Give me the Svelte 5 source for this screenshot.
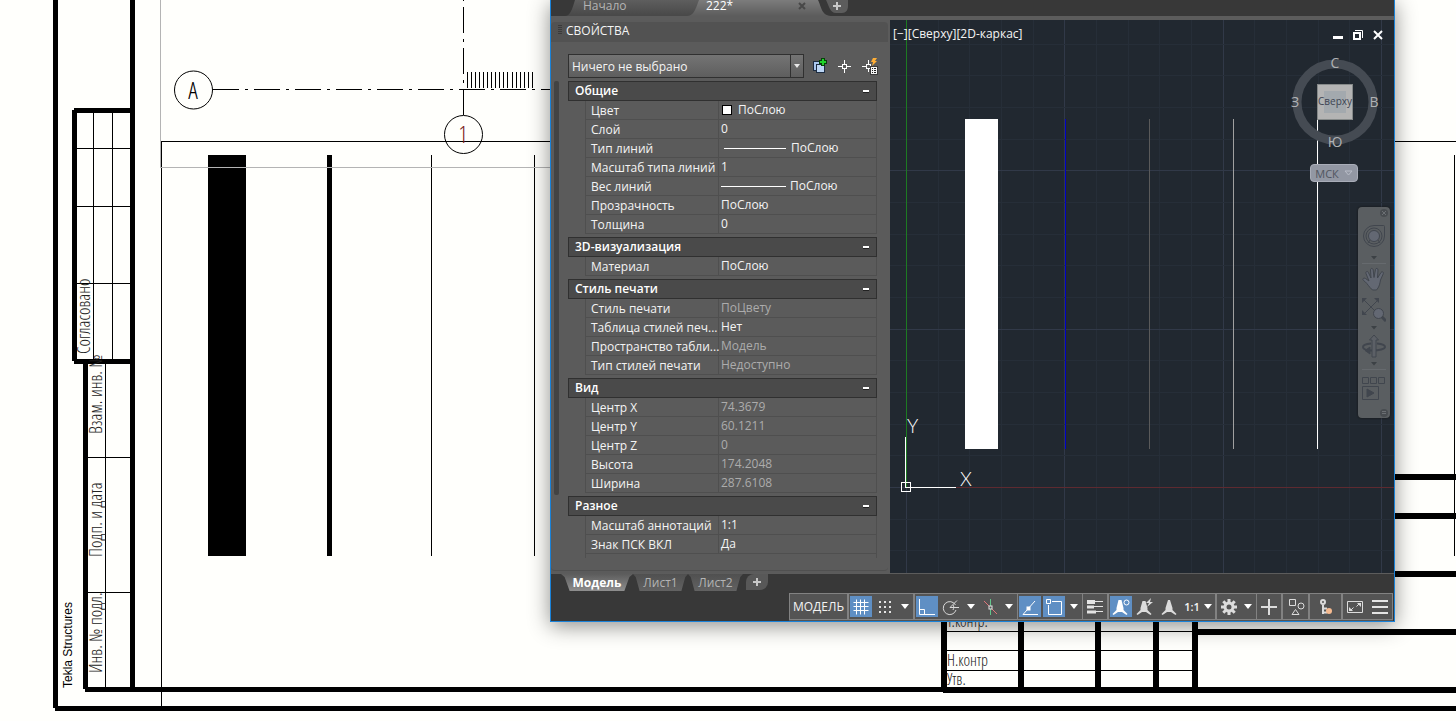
<script lang="ts">
  type Row = { label: string; value: string; kind?: 'color' | 'line' | 'weight'; muted?: boolean };
  type Section = { title: string; rows: Row[] };

  const sections: Section[] = [
    {
      title: 'Общие',
      rows: [
        { label: 'Цвет', value: 'ПоСлою', kind: 'color' },
        { label: 'Слой', value: '0' },
        { label: 'Тип линий', value: 'ПоСлою', kind: 'line' },
        { label: 'Масштаб типа линий', value: '1' },
        { label: 'Вес линий', value: 'ПоСлою', kind: 'weight' },
        { label: 'Прозрачность', value: 'ПоСлою' },
        { label: 'Толщина', value: '0' },
      ],
    },
    { title: '3D-визуализация', rows: [{ label: 'Материал', value: 'ПоСлою' }] },
    {
      title: 'Стиль печати',
      rows: [
        { label: 'Стиль печати', value: 'ПоЦвету', muted: true },
        { label: 'Таблица стилей печ...', value: 'Нет' },
        { label: 'Пространство табли...', value: 'Модель', muted: true },
        { label: 'Тип стилей печати', value: 'Недоступно', muted: true },
      ],
    },
    {
      title: 'Вид',
      rows: [
        { label: 'Центр X', value: '74.3679', muted: true },
        { label: 'Центр Y', value: '60.1211', muted: true },
        { label: 'Центр Z', value: '0', muted: true },
        { label: 'Высота', value: '174.2048', muted: true },
        { label: 'Ширина', value: '287.6108', muted: true },
      ],
    },
    {
      title: 'Разное',
      rows: [
        { label: 'Масштаб аннотаций', value: '1:1' },
        { label: 'Знак ПСК ВКЛ', value: 'Да' },
      ],
    },
  ];

  let closed = $state<Record<string, boolean>>({});
  let selection = $state('none');
  let layout = $state('Модель');

  // Grid lines, every fifth one is major. Origin of the UCS is at 16,467.
  const step = 31.66;
  const range = (from: number, to: number) => Array.from({ length: to - from }, (_, i) => from + i);
  const gridX = range(0, 60).map((i) => ({ at: Math.round(16 + i * step), major: i % 5 === 0 }));
  const gridY = range(-3, 15).map((i) => ({ at: Math.round(467 - i * step), major: i % 5 === 0 }));

  const hatch = range(0, 17).map((i) => 467 + i * 4 + (i > 10 ? 1 : 0));

  function toggle(title: string) {
    closed[title] = !closed[title];
  }
</script>

{#snippet arrow(name: string)}
  <button class="cell arrow" aria-label={name}>
    <svg width="8" height="5" viewBox="0 0 8 5"><path d="M0 0h8L4 5z" fill="#fff" /></svg>
  </button>
{/snippet}

{#snippet navArrow(name: string)}
  <button class="nav-arrow" aria-label={name}>
    <svg width="6" height="4" viewBox="0 0 6 4"><path d="M0 0h6L3 3.500z" fill="#3c4145" /></svg>
  </button>
{/snippet}

<main class="desktop">
  <svg class="sheet" width="1456" height="721" shape-rendering="crispEdges" aria-label="Чертёж">
    <g fill="#000">
      <rect x="53" y="0" width="5" height="708" />
      <rect x="55" y="706" width="100%" height="5" />
      <rect x="130" y="0" width="5" height="690" />
      <rect x="74" y="108" width="60" height="5" />
      <rect x="72" y="110" width="5" height="251" />
      <rect x="74" y="359" width="60" height="5" />
      <rect x="83" y="364" width="5" height="325" />
      <rect x="85" y="687" width="100%" height="5" />
      <rect x="943" y="687" width="100%" height="6" />
      <rect x="208" y="155" width="38" height="401" />
      <rect x="327" y="155" width="5" height="401" />
      <rect x="431" y="155" width="1" height="401" />
      <rect x="534" y="155" width="1" height="401" />
      <rect x="1454" y="155" width="1" height="401" />
      <rect x="1380" y="474" width="100%" height="6" />
      <rect x="1380" y="513" width="100%" height="6" />
      <rect x="1380" y="571" width="100%" height="6" />
      <rect x="1192" y="629" width="100%" height="6" />
      {#each [941, 1018, 1095, 1153, 1192] as x}
        <rect {x} y="600" width="6" height="88" />
      {/each}
      {#each hatch as x}
        <rect {x} y="72" width="1" height="16" />
      {/each}
    </g>
    <path
      d="M93.500 113v246M112.500 113v246M77 148.500h53M77 206.500h53M77 283.500h53M105.500 364v323M88 457.500h42M88 592.500h42M161.500 706V141.500H1456M947 631.500h245M947 650.500h245M947 670.500h245"
      fill="none"
      stroke="#000"
    />
    <path d="M160.500 0v167.500H560" fill="none" stroke="#b4b4b4" />
    <path d="M213 89.500H560" stroke="#000" stroke-dasharray="26 6 3 6" />
    <path d="M463.500 -34V115" stroke="#000" stroke-dasharray="26 6 3 6" />
    <g fill="none" stroke="#000" shape-rendering="auto">
      <circle cx="193.500" cy="90" r="19" />
      <circle cx="463.500" cy="134.500" r="19" />
    </g>
    <g class="gost">
      <text class="mark" x="193" y="99" text-anchor="middle">А</text>
      <text class="mark red" x="463" y="143" text-anchor="middle">1</text>
      <text transform="translate(90 354) rotate(-90)">Согласовано</text>
      <text transform="translate(102 434) rotate(-90)">Взам. инв. №</text>
      <text transform="translate(102 557) rotate(-90)">Подп. и дата</text>
      <text transform="translate(102 673) rotate(-90)">Инв. № подл.</text>
      <text class="small" x="947" y="627">Т.контр.</text>
      <text class="small" x="947" y="666">Н.контр</text>
      <text class="small" x="947" y="685">Утв.</text>
    </g>
    <text class="tekla" transform="translate(72 688) rotate(-90)">Tekla Structures</text>
  </svg>

  <section class="window">
    <nav class="file-tabs">
      <button class="file-tab">
        <svg class="shape" width="142" height="16" viewBox="0 0 142 16">
          <defs>
            <linearGradient id="idle" x2="0" y2="1">
              <stop offset="0" stop-color="#5e5e5e" />
              <stop offset="1" stop-color="#484848" />
            </linearGradient>
          </defs>
          <path d="M10 0C7 10 5 16 0 16H142V0z" fill="url(#idle)" />
        </svg>
        <span>Начало</span>
      </button>
      <button class="file-tab current">
        <svg class="shape" width="142" height="16" viewBox="0 0 142 16">
          <defs>
            <linearGradient id="live" x2="0" y2="1">
              <stop offset="0" stop-color="#7c7c7c" />
              <stop offset="1" stop-color="#5c5c5c" />
            </linearGradient>
          </defs>
          <path d="M8 0C4 11 2 16 -4 16H142C130 16 131 8 127 0z" fill="url(#live)" />
        </svg>
        <span>222*</span>
        <svg class="close" width="8" height="8" viewBox="0 0 8 8">
          <path d="M1 1l6 6M7 1L1 7" stroke="#484848" stroke-width="2" />
        </svg>
      </button>
      <button class="file-add" aria-label="Новый чертеж">
        <svg width="24" height="14" viewBox="0 0 24 14">
          <path d="M0 0h22v6c0 4-2 7-6 7h-6C4 13 3 6 0 0z" fill="#5c5c5c" />
          <path d="M11 2v8M7 6h8" stroke="#c8c8c8" stroke-width="2" />
        </svg>
      </button>
    </nav>

    <div class="body">
      <aside class="properties">
        <h2><span class="grip"></span>СВОЙСТВА</h2>
        <div class="picker">
          <label class="combo">
            <select bind:value={selection} aria-label="Выбранные объекты">
              <option value="none">Ничего не выбрано</option>
            </select>
            <svg width="6" height="4" viewBox="0 0 6 4"><path d="M0 0h6L3 4z" fill="#e8e8e8" /></svg>
          </label>
          <button class="tool" aria-label="Добавлять при выборе">
            <svg width="17" height="18" viewBox="0 0 17 18">
              <rect x="2.500" y="4.500" width="9" height="9" fill="#a9c7ee" stroke="#1d2d42" />
              <rect x="5.500" y="7.500" width="8" height="8" fill="#bcd6f5" stroke="#1d2d42" />
              <path d="M12 1v8M8 5h8" stroke="#08400a" stroke-width="4" />
              <path d="M12 2v6M9 5h6" stroke="#1fd22a" stroke-width="2" />
            </svg>
          </button>
          <button class="tool" aria-label="Выбрать объекты">
            <svg width="15" height="15" viewBox="0 0 15 15" fill="none" stroke="#fff">
              <path d="M7.500 1v4M7.500 10v4M1 7.500h4M10 7.500h4" />
              <rect x="5.500" y="5.500" width="4" height="4" />
            </svg>
          </button>
          <button class="tool" aria-label="Быстрый выбор">
            <svg width="17" height="18" viewBox="0 0 17 18" fill="none">
              <path d="M7.500 3v4M7.500 12v3M1 9.500h4" stroke="#fff" />
              <rect x="5.500" y="7.500" width="4" height="4" stroke="#fff" />
              <path d="M12 1h4l-2 3h2l-5 5 1-4h-2z" fill="#ffae35" />
              <rect x="9" y="9" width="8" height="9" fill="#3a3a3a" />
              <rect x="10" y="10" width="6" height="7" fill="#f4f4f4" />
              <path d="M11 11.500h1M13 11.500h2M11 13.500h1M13 13.500h2M11 15.500h1M13 15.500h2" stroke="#222" />
            </svg>
          </button>
        </div>

        <div class="list">
          <div class="scroll"></div>
          <div class="sections">
            {#each sections as section}
              <div class="section">
                <button class="title" onclick={() => toggle(section.title)}>
                  {section.title}<i class="minus"></i>
                </button>
                {#if !closed[section.title]}
                  <table>
                    <tbody>
                      {#each section.rows as row}
                        <tr>
                          <th scope="row">{row.label}</th>
                          <td class:muted={row.muted}>
                            <div class="value">
                              {#if row.kind}<i class={row.kind}></i>{/if}
                              {row.value}
                            </div>
                          </td>
                        </tr>
                      {/each}
                    </tbody>
                  </table>
                {/if}
              </div>
            {/each}
            <div class="more"></div>
          </div>
        </div>
      </aside>

      <div class="viewport">
        <svg class="model" width="100%" height="100%">
          <g shape-rendering="crispEdges">
            {#each gridX as line}
              <rect x={line.at} y="0" width="1" height="100%" class:major={line.major} class="grid" />
            {/each}
            {#each gridY as line}
              <rect x="0" y={line.at} width="100%" height="1" class:major={line.major} class="grid" />
            {/each}
            <rect x="16" y="0" width="1" height="467" fill="#1d7a22" />
            <rect x="66" y="467" width="100%" height="1" fill="#5e2a30" />
            <rect x="75" y="99" width="33" height="330" fill="#fff" />
            <rect x="175" y="99" width="1" height="330" fill="#0000c8" />
            <rect x="259" y="99" width="1" height="330" fill="#5a5a5a" />
            <rect x="343" y="99" width="1" height="330" fill="#a0a0a0" />
            <rect x="427" y="99" width="1" height="330" fill="#fff" />
            <path d="M15.500 417v50.500H66M11.500 462.500h9v9h-9z" fill="none" stroke="#fff" />
          </g>
          <text class="axis" x="17" y="413">Y</text>
          <text class="axis" x="70" y="466">X</text>
        </svg>

        <header>
          <span>[−][Сверху][2D-каркас]</span>
          <div class="controls">
            <button aria-label="Свернуть">
              <svg width="12" height="12" viewBox="0 0 12 12"><path d="M1 8.500h10" stroke="#fff" stroke-width="3" /></svg>
            </button>
            <button aria-label="Развернуть">
              <svg width="12" height="12" viewBox="0 0 12 12" fill="none" stroke="#fff">
                <path d="M3 1.500h7.500V9" />
                <rect x="2" y="4" width="6" height="6" stroke-width="2" />
              </svg>
            </button>
            <button aria-label="Закрыть">
              <svg width="12" height="12" viewBox="0 0 12 12"><path d="M2 2l8 8M10 2l-8 8" stroke="#fff" stroke-width="2" /></svg>
            </button>
          </div>
        </header>

        <div class="view-tools">
          <svg class="cube" width="96" height="104" viewBox="0 0 96 104">
            <circle cx="48" cy="54" r="38" fill="none" stroke="#454b53" stroke-width="9" />
            <rect x="30.500" y="36.500" width="35" height="35" fill="#b4b4b4" stroke="#858989" />
            <rect x="37" y="43" width="22" height="22" fill="#a3a9ae" />
            <text class="face" x="48" y="57">Сверху</text>
            <text x="48" y="20">С</text>
            <text x="8" y="59">З</text>
            <text x="87" y="59">В</text>
            <text x="48" y="99">Ю</text>
          </svg>
          <button class="ucs">
            МСК
            <svg width="9" height="6" viewBox="0 0 9 6"><path d="M1 1h7L4.500 5z" fill="none" stroke="#b9bdc8" /></svg>
          </button>
          <nav class="nav-bar">
            <button class="nav-mini" aria-label="Закрыть панель">
              <svg width="8" height="8" viewBox="0 0 8 8">
                <circle cx="4" cy="4" r="4" fill="#484c50" />
                <path d="M2 2l4 4M6 2L2 6" stroke="#6b6f73" />
              </svg>
            </button>
            <button class="nav-wheel" aria-label="Штурвал">
              <svg width="24" height="24" viewBox="0 0 24 24" fill="none" stroke="#41464e">
                <path d="M12 1.500h9.500a1 1 0 0 1 1 1V12A10.500 10.500 0 1 1 12 1.500z" />
                <circle cx="12" cy="12" r="8" />
                <circle cx="12" cy="12" r="5.500" fill="#636873" />
                <path d="M8 16l-2 3M16 16l2 3" />
              </svg>
            </button>
            {@render navArrow('Штурвалы')}
            <hr />
            <button class="nav-hand" aria-label="Панорамирование">
              <svg width="24" height="24" viewBox="0 0 24 24" fill="#636873" stroke="#41464e">
                <path d="M8 20.500C5.500 17.500 4 15 1.500 13.500 0 12 1.500 10.500 3.500 11.500L7 14 4 6.500C3.300 4.500 5.600 3.700 6.400 5.500L9 11 8.500 3C8.500 1 11 1 11.200 3L12 10.500 13.500 2.500C14 .7 16.200 1.200 16 3L15.500 11 19 5.500C20 4 22 5 21.300 6.700L18.500 13c-.5 3-1 5.500-2.500 8l-1.500 2h-4z" />
              </svg>
            </button>
            <button class="nav-zoom" aria-label="Зумирование">
              <svg width="24" height="24" viewBox="0 0 24 24" fill="none" stroke="#41464e">
                <path d="M2 2l14 14M16 2L2 16" />
                <path d="M0 0h5L0 5zM17 0v5l-5-5zM0 17v-5l5 5z" fill="#41464e" stroke="none" />
                <circle cx="16.500" cy="15.500" r="5" fill="#636873" />
                <path d="M20 19l4 4" stroke-width="3" />
              </svg>
            </button>
            {@render navArrow('Режимы зумирования')}
            <button class="nav-orbit" aria-label="Орбита">
              <svg width="24" height="24" viewBox="0 0 24 24" fill="none" stroke="#41464e">
                <path d="M9 9.500C3 10 1 11.500 1 13s3 3 6 3.500M15 9.500c6 .5 8 2 8 3.500s-5 4-15 3.500" stroke-width="2" />
                <path d="M12 1l4.500 5H14v17h-4V6H7.500z" fill="#5c6066" />
                <path d="M8 13v7l-5-3.500z" fill="#41464e" />
              </svg>
            </button>
            {@render navArrow('Режимы орбиты')}
            <hr />
            <button class="nav-motion" aria-label="Аниматор движения">
              <svg width="24" height="24" viewBox="0 0 24 24" fill="none" stroke="#41464e">
                <path d="M.500.500h6v6h-6zM8.500.500h6v6h-6zM16.500.500h6v6h-6zM.500 9.500h16v13h-16z" />
                <path d="M5 12l7 4-7 4z" fill="#41464e" />
              </svg>
            </button>
            <button class="nav-mini" aria-label="Настройка панели">
              <svg width="8" height="8" viewBox="0 0 8 8">
                <circle cx="4" cy="4" r="4" fill="#484c50" />
                <path d="M2 2.500h4M2 4.500h4" stroke="#6b6f73" />
              </svg>
            </button>
          </nav>
        </div>
      </div>
    </div>

    <footer>
      <nav class="layouts">
        {#each ['Модель', 'Лист1', 'Лист2'] as name}
          <button class="layout" class:active={layout === name} onclick={() => (layout = name)}>
            <span>{name}</span>
          </button>
        {/each}
        <button class="layout-add" aria-label="Новый лист">
          <svg width="10" height="10" viewBox="0 0 10 10"><path d="M5 1v8M1 5h8" stroke="#c8c8c8" stroke-width="2" /></svg>
        </button>
      </nav>

      <div class="status">
        <div class="group"><button class="cell model-btn">МОДЕЛЬ</button></div>
        <div class="group">
          <button class="cell on" aria-label="Сетка">
            <svg width="18" height="18" viewBox="0 0 18 18"><path d="M4.500 1.500v15M8.500 1.500v15M12.500 1.500v15M1.500 4.500h15M1.500 8.500h15M1.500 12.500h15" stroke="#fff" /></svg>
          </button>
          <button class="cell" aria-label="Шаговая привязка">
            <svg width="18" height="18" viewBox="0 0 18 18">
              <path d="M3 4h12M3 9h12M3 14h12" stroke="#e4e4e4" stroke-width="2" stroke-dasharray="2 3" />
            </svg>
          </button>
          {@render arrow('Режимы привязки')}
        </div>
        <div class="group">
          <button class="cell on" aria-label="Орто">
            <svg width="18" height="18" viewBox="0 0 18 18" fill="none" stroke="#fff"><path d="M1.500 1v15.500H17M1.500 11.500h5v5" /></svg>
          </button>
          <button class="cell" aria-label="Полярное отслеживание">
            <svg width="18" height="18" viewBox="0 0 18 18" fill="none" stroke="#d8d8d8">
              <path d="M13.500 7A6.500 6.500 0 1 0 14 12M8 9.500h9M8 9.500l7-7" />
              <path d="M11 7c1 1 1 3 0 5" />
            </svg>
          </button>
          {@render arrow('Углы отслеживания')}
          <button class="cell iso" aria-label="Изометрия">
            <svg width="18" height="18" viewBox="0 0 18 18" fill="none">
              <path d="M3 3l13 13" stroke="#e0757a" />
              <path d="M9.500 1v16" stroke="#63c58b" />
              <rect x="8" y="8" width="3" height="3" fill="#545454" stroke="#e4e4e4" />
            </svg>
          </button>
          {@render arrow('Плоскости')}
        </div>
        <div class="group joined">
          <button class="cell on" aria-label="Объектное отслеживание">
            <svg width="18" height="18" viewBox="0 0 18 18" fill="none" stroke="#fff">
              <path d="M14 3L2 16.500h15" />
              <rect x="6" y="9" width="3" height="3" fill="#fff" />
            </svg>
          </button>
          <button class="cell on" aria-label="Объектная привязка">
            <svg width="18" height="18" viewBox="0 0 18 18" fill="none" stroke="#fff">
              <path d="M7 3.500h9.500v13h-13V7M1.500 1.500h4v4h-4z" />
            </svg>
          </button>
          {@render arrow('Настройка объектной привязки')}
        </div>
        <div class="group joined">
          <button class="cell" aria-label="Вес линий">
            <svg width="18" height="18" viewBox="0 0 18 18" stroke="#e4e4e4">
              <path d="M9 3.500h8M8 8.500h9M1 13.500h16" />
              <path d="M1 4h8" stroke-width="4" />
              <path d="M1 9h7" stroke-width="3" />
              <path d="M1 14h9" stroke-width="3" />
            </svg>
          </button>
        </div>
        <div class="group">
          <button class="cell on" aria-label="Видимость аннотаций">
            <svg width="18" height="18" viewBox="0 0 18 18">
              <path d="M6.500 2h3l2 8v2l4 4-1 1-4.500-3h-4L1.500 17l-1-1 4-4v-2z" fill="#fff" />
              <circle cx="14.500" cy="4.500" r="2.500" fill="#5f8fc4" stroke="#fff" />
            </svg>
          </button>
          <button class="cell" aria-label="Автомасштаб">
            <svg width="18" height="18" viewBox="0 0 18 18" fill="#dcdcdc">
              <path d="M6.500 3h3l2 7v2l4 4-1 1-4.500-3h-4L1.500 17l-1-1 4-4v-2z" />
              <path d="M15 0l-5 5h3l-2 4 6-5h-3z" />
            </svg>
          </button>
          <button class="cell" aria-label="Масштаб аннотаций">
            <svg width="18" height="18" viewBox="0 0 18 18" fill="#dcdcdc">
              <path d="M8 2h2l2.500 8v2l4 4-1 1-4.500-3H7l-4.500 3-1-1 4-4v-2z" />
            </svg>
          </button>
          <button class="cell scale">
            1:1<svg width="8" height="5" viewBox="0 0 8 5"><path d="M0 0h8L4 5z" fill="#fff" /></svg>
          </button>
        </div>
        <div class="group">
          <button class="cell gear" aria-label="Рабочее пространство">
            <svg width="16" height="16" viewBox="0 0 16 16" fill="none" stroke="#dcdcdc">
              <circle cx="8" cy="8" r="4" stroke-width="3" />
              <path d="M8 0v3M8 13v3M0 8h3M13 8h3M2.300 2.300l2.200 2.200M11.500 11.500l2.200 2.200M13.700 2.300l-2.200 2.200M4.500 11.500l-2.200 2.200" stroke-width="3" />
            </svg>
          </button>
          {@render arrow('Выбор рабочего пространства')}
        </div>
        <div class="group joined">
          <button class="cell" aria-label="Монитор аннотаций">
            <svg width="18" height="18" viewBox="0 0 18 18"><path d="M9 1v16M1 9h16" stroke="#dcdcdc" stroke-width="2" /></svg>
          </button>
        </div>
        <div class="group">
          <button class="cell wide" aria-label="Изолировать объекты">
            <svg width="18" height="18" viewBox="0 0 18 18" fill="none" stroke="#dcdcdc">
              <path d="M2.500 1.500h6v6h-6zM8.500 11.500l3.500 5H5z" />
              <circle cx="14" cy="8" r="3" />
            </svg>
          </button>
        </div>
        <div class="group">
          <button class="cell key" aria-label="Аппаратное ускорение">
            <svg width="18" height="18" viewBox="0 0 18 18">
              <circle cx="6" cy="4" r="2" fill="none" stroke="#dcdcdc" stroke-width="2" />
              <path d="M6 7v9M7 10.500h3M7 14.500h3" stroke="#dcdcdc" stroke-width="2" />
              <circle cx="12" cy="13" r="3" fill="#f6ba90" />
            </svg>
          </button>
        </div>
        <div class="group">
          <button class="cell" aria-label="Чистый экран">
            <svg width="18" height="18" viewBox="0 0 18 18" fill="none" stroke="#dcdcdc">
              <path d="M1.500 3.500h15v11h-15z" />
              <path d="M11 5h4v4zM3 9v4h4z" fill="#dcdcdc" stroke="none" />
              <path d="M10.500 8.500l3-3M7.500 9.500l-3 3" />
            </svg>
          </button>
          <button class="cell wide" aria-label="Настройка">
            <svg width="18" height="18" viewBox="0 0 18 18"><path d="M1 3h16M1 9h16M1 15h16" stroke="#e4e4e4" stroke-width="2" /></svg>
          </button>
        </div>
      </div>
    </footer>
  </section>
</main>

<style>
  :global(body) {
    margin: 0;
    background: #fffffc;
  }

  .desktop {
    position: relative;
    min-height: 100vh;
    overflow: hidden;
    font-family: 'Open Sans', 'Noto Sans', sans-serif;
    font-size: 12px;
    color: #f4f4f4;
  }

  .sheet {
    display: block;
    width: 100%;
  }

  .gost {
    font-family: 'Open Sans Condensed Light', 'Open Sans Condensed', 'DejaVu Sans Condensed', sans-serif;
    font-size: 18px;
    font-weight: 300;
    fill: #222;
  }

  .small {
    font-size: 16px;
  }

  .mark {
    font-size: 24px;
    fill: #000;
  }

  .red {
    fill: #7a1c1c;
  }

  .tekla {
    font-family: 'Liberation Sans', sans-serif;
    font-size: 12px;
    fill: #000;
  }

  button {
    display: flex;
    align-items: center;
    justify-content: center;
    padding: 0;
    border: none;
    background: none;
    font: inherit;
    color: inherit;
    cursor: pointer;
  }

  .window {
    position: absolute;
    top: 0;
    left: 550px;
    right: 61px;
    border: 1px solid #1a82d8;
    border-top: none;
    background: #383838;
    box-shadow: 0 4px 20px rgba(0, 0, 0, 0.45);
  }

  .file-tabs {
    display: flex;
    height: 16px;
    padding-left: 14px;
    border-bottom: 4px solid #5c5c5c;
  }

  .file-tab {
    position: relative;
    align-items: flex-start;
    justify-content: flex-start;
    width: 126px;
    padding-left: 18px;
    line-height: 12px;
    color: #b4b4b4;
  }

  .current {
    width: 135px;
    padding-left: 15px;
    color: #fff;
  }

  .shape {
    position: absolute;
    top: 0;
    left: 0;
    overflow: visible;
  }

  .file-tab span {
    position: relative;
    flex: 1;
    text-align: left;
  }

  .close {
    position: relative;
    margin: 2px 20px 0 0;
  }

  .file-add {
    align-items: flex-start;
    width: 24px;
  }

  .body {
    display: flex;
  }

  .properties {
    flex: none;
    width: 339px;
    background: #5b5b5b;
  }

  h2 {
    display: flex;
    align-items: center;
    gap: 4px;
    box-sizing: border-box;
    height: 20px;
    margin: 2px 2px 0 0;
    padding: 0 0 4px 7px;
    border-radius: 4px 4px 0 0;
    background: #525252;
    font-size: 12px;
    font-weight: 400;
  }

  .grip {
    width: 4px;
    height: 10px;
    background: repeating-linear-gradient(#3a3a3a 0 1px, transparent 1px 2px);
  }

  .picker {
    display: flex;
    padding: 12px 0 3px 17px;
  }

  .combo {
    position: relative;
    width: 236px;
    margin-right: 3px;
  }

  .combo select {
    width: 100%;
    height: 24px;
    padding: 0 3px;
    border: 1px solid #303030;
    border-radius: 0;
    background: linear-gradient(#747474, #5e5e5e);
    color: #f4f4f4;
    font: inherit;
    appearance: none;
  }

  .combo svg {
    position: absolute;
    top: 1px;
    right: 1px;
    padding: 9px 3px;
    border-left: 1px solid #303030;
  }

  .tool {
    width: 25px;
    height: 24px;
  }

  .list {
    display: flex;
    gap: 9px;
    margin: 0 2px 2px 0;
    padding: 0 0 12px 3px;
    border-bottom: 1px solid #505050;
    border-radius: 0 0 4px 4px;
  }

  .scroll {
    width: 5px;
    height: 414px;
    border-radius: 2px;
    background: #434343;
  }

  .sections {
    width: 309px;
  }

  .section {
    margin-bottom: 3px;
  }

  .section:nth-last-child(2) {
    margin-bottom: 0;
  }

  .title {
    justify-content: space-between;
    box-sizing: border-box;
    width: 100%;
    height: 20px;
    padding: 0 7px 1px 6px;
    border: 1px solid #303030;
    background: #4a4a4a;
    color: #fff;
    font-weight: 600;
  }

  .minus {
    width: 6px;
    height: 2px;
    background: #fff;
    box-shadow: 0 1px #222;
  }

  table {
    width: 292px;
    margin-left: 17px;
    border-collapse: separate;
    border-spacing: 0;
    table-layout: fixed;
  }

  tr {
    height: 19px;
  }

  th,
  td {
    box-sizing: border-box;
    height: 19px;
    border: 0 solid #4f4f4f;
    border-bottom-width: 1px;
    font-weight: 400;
    line-height: 16px;
    text-align: left;
    white-space: nowrap;
  }

  th {
    width: 133px;
    padding: 2px 0 0 5px;
    border-left-width: 1px;
  }

  td {
    padding: 0 0 0 2px;
    border-left-width: 1px;
    border-right-width: 1px;
  }

  .value {
    display: flex;
    align-items: center;
  }

  .muted {
    color: #acacac;
  }

  .color {
    width: 8px;
    height: 8px;
    margin: 0 6px 0 1px;
    border: 1px solid #000;
    background: #fff;
  }

  .line {
    width: 62px;
    height: 1px;
    margin: 0 5px 0 3px;
    background: #fff;
  }

  .weight {
    width: 65px;
    height: 1px;
    margin: 0 4px 0 0;
    background: #fff;
  }

  .more {
    box-sizing: border-box;
    width: 292px;
    height: 4px;
    margin-left: 17px;
    border: solid #4f4f4f;
    border-width: 0 1px;
  }

  .viewport {
    position: relative;
    flex: 1;
    min-width: 0;
    overflow: hidden;
    background: #212830;
  }

  .model {
    position: absolute;
    inset: 0;
  }

  .grid {
    fill: #262e38;
  }

  .grid.major {
    fill: #313948;
  }

  .axis {
    font-family: Lato, sans-serif;
    font-size: 19px;
    font-weight: 300;
    fill: #fff;
  }

  header {
    position: relative;
    display: flex;
    justify-content: space-between;
    height: 28px;
    padding: 0 10px 0 3px;
    line-height: 28px;
  }

  .controls {
    display: flex;
    gap: 8px;
    padding-top: 1px;
  }

  .view-tools {
    position: relative;
    display: flex;
    flex-direction: column;
    align-items: flex-end;
    padding-right: 4px;
  }

  .cube {
    margin-right: 7px;
  }

  .cube text {
    font-size: 14px;
    fill: #b0b2b4;
    text-anchor: middle;
  }

  .cube .face {
    font-size: 10px;
    fill: #3d4452;
  }

  .ucs {
    gap: 5px;
    width: 48px;
    height: 18px;
    margin: 12px 32px 25px 0;
    border: 1px solid #a9adb8;
    border-radius: 4px;
    background: #9297a3;
    color: #50555f;
    font-size: 11px;
  }

  .nav-bar {
    box-sizing: border-box;
    width: 32px;
    padding: 1px 0;
    border-radius: 4px;
    background: #5a5e61;
    box-shadow: 0 0 2px #111;
  }

  .nav-bar button {
    width: 100%;
  }

  .nav-bar .nav-mini {
    justify-content: flex-end;
    height: 9px;
    padding-right: 2px;
  }

  .nav-wheel {
    height: 38px;
  }

  .nav-arrow {
    height: 5px;
  }

  .nav-bar hr {
    margin: 3px 4px 0;
    border: none;
    border-top: 1px solid #666a6e;
  }

  .nav-hand {
    height: 30px;
  }

  .nav-zoom,
  .nav-orbit {
    height: 31px;
  }

  .nav-motion {
    height: 38px;
  }

  footer {
    border-top: 1px solid #5c5c5c;
  }

  .layouts {
    display: flex;
    height: 19px;
    padding-left: 10px;
  }

  .layout {
    width: 55px;
    height: 17px;
    clip-path: polygon(0 0, 100% 0, 95% 18%, 88% 100%, 12% 100%, 5% 18%);
    background: linear-gradient(#505050, #626262);
    color: #b4b4b4;
  }

  .layout.active {
    width: 72px;
    background: linear-gradient(#5c5c5c, #8e8e8e);
    color: #fff;
    font-weight: 700;
  }

  .layout-add {
    width: 22px;
    height: 16px;
    margin-left: 3px;
    border-radius: 8px 0 8px 0;
    background: #585858;
  }

  .status {
    display: flex;
    width: max-content;
    height: 27px;
    margin: 0 1px 0 auto;
    padding-bottom: 1px;
    background: #545454;
  }

  .group {
    display: flex;
    border: 1px solid #828282;
  }

  .joined {
    border-left: none;
  }

  .cell {
    width: 24px;
  }

  .on {
    background: #5f8fc4;
    border: solid #545454;
    border-width: 2px 1px;
  }

  .arrow {
    width: 16px;
  }

  .iso {
    width: 22px;
  }

  .model-btn {
    width: 57px;
  }

  .scale {
    gap: 4px;
    width: 34px;
    font-size: 11px;
    font-weight: 600;
  }

  .gear {
    width: 23px;
  }

  .wide {
    width: 25px;
  }

  .key {
    width: 31px;
  }
</style>
